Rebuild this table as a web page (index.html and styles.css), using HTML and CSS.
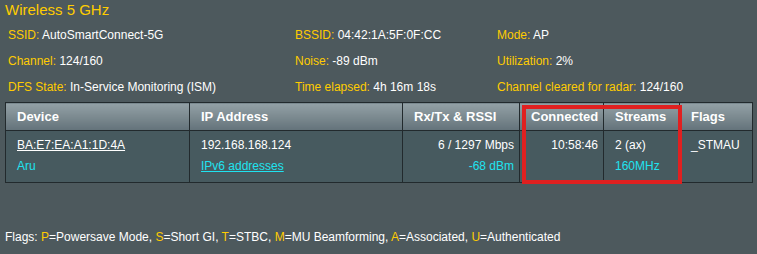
FILE: index.html
```html
<!DOCTYPE html>
<html>
<head>
<meta charset="utf-8">
<link rel="stylesheet" href="styles.css">
</head>
<body>
<div class="title">Wireless 5 GHz</div>
<div class="info">
  <div><span class="lbl">SSID: </span>AutoSmartConnect-5G</div>
  <div><span class="lbl">BSSID: </span>04:42:1A:5F:0F:CC</div>
  <div><span class="lbl">Mode: </span>AP</div>
  <div><span class="lbl">Channel: </span>124/160</div>
  <div><span class="lbl">Noise: </span>-89 dBm</div>
  <div><span class="lbl">Utilization: </span>2%</div>
  <div><span class="lbl">DFS State: </span>In-Service Monitoring (ISM)</div>
  <div><span class="lbl">Time elapsed: </span>4h 16m 18s</div>
  <div><span class="lbl">Channel cleared for radar: </span>124/160</div>
</div>
<div class="tablewrap">
  <table class="clients">
    <colgroup>
      <col class="c1"><col class="c2"><col class="c3"><col class="c4"><col class="c5"><col class="c6">
    </colgroup>
    <thead>
      <tr>
        <th>Device</th>
        <th>IP Address</th>
        <th>Rx/Tx &amp; RSSI</th>
        <th>Connected</th>
        <th>Streams</th>
        <th>Flags</th>
      </tr>
    </thead>
    <tbody>
      <tr>
        <td><span class="link">BA:E7:EA:A1:1D:4A</span><br><span class="cyan">Aru</span></td>
        <td>192.168.168.124<br><span class="link cyan">IPv6 addresses</span></td>
        <td class="num">6 / 1297 Mbps<br><span class="cyan">-68 dBm</span></td>
        <td class="num">10:58:46<br>&nbsp;</td>
        <td>2 (ax)<br><span class="cyan">160MHz</span></td>
        <td>_STMAU<br>&nbsp;</td>
      </tr>
    </tbody>
  </table>
  <div class="highlight"></div>
</div>
<div class="legend">Flags: <span class="lbl">P</span>=Powersave Mode, <span class="lbl">S</span>=Short GI, <span class="lbl">T</span>=STBC, <span class="lbl">M</span>=MU Beamforming, <span class="lbl">A</span>=Associated, <span class="lbl">U</span>=Authenticated</div>
</body>
</html>
```
FILE: styles.css
```css
html, body {
  margin: 0;
  padding: 0;
  background: #4d595d;
  color: #ffffff;
  font-family: "Liberation Sans", Arial, sans-serif;
  font-size: 12px;
}
.title {
  color: #ffcc00;
  font-size: 15px;
  line-height: 20px;
  padding-left: 5px;
}
.lbl { color: #ffcc00; }
.cyan { color: #1fe3f0; }
.info {
  margin-top: 2px;
  padding-left: 8px;
  display: grid;
  grid-template-columns: 287px 202px 1fr;
  grid-auto-rows: 26px;
  line-height: 26px;
  white-space: nowrap;
}
.tablewrap {
  position: relative;
  margin: 2px 0 0 5px;
  width: 747px;
}
.clients {
  border-collapse: collapse;
  table-layout: fixed;
  width: 747px;
  background: #475a5f;
}
.c1 { width: 184px; }
.c2 { width: 213px; }
.c3 { width: 117px; }
.c4 { width: 84px; }
.c5 { width: 76px; }
.c6 { width: 73px; }
.clients th, .clients td {
  border: 1px solid #222a2d;
}
.clients th {
  height: 27px;
  padding: 0 0 0 11px;
  text-align: left;
  font-weight: bold;
  font-size: 13px;
  color: #ffffff;
  background: linear-gradient(to bottom, #93a1a6 0%, #7c8a90 50%, #63727a 100%);
  white-space: nowrap;
  overflow: visible;
}
.clients td {
  padding: 4px 5px 5px 11px;
  line-height: 21px;
  vertical-align: top;
  white-space: nowrap;
}
.clients td.num {
  text-align: right;
  padding-right: 5px;
}
.link { text-decoration: underline; }
.highlight {
  position: absolute;
  left: 517px;
  top: 3px;
  width: 152px;
  height: 71px;
  border: 4px solid #e02020;
}
.legend {
  margin-top: 46px;
  padding-left: 5px;
  line-height: 16px;
  white-space: nowrap;
}
```
